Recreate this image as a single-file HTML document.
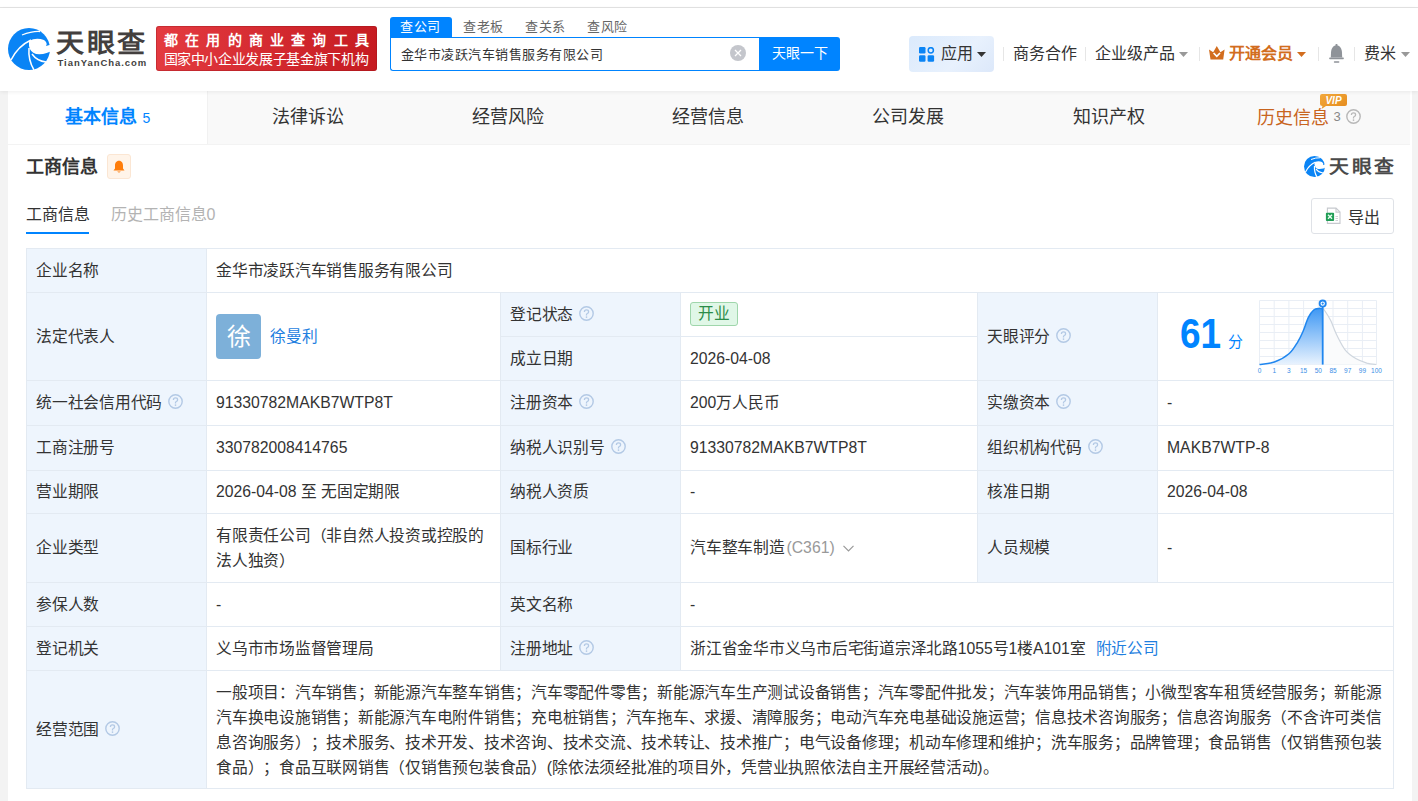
<!DOCTYPE html>
<html lang="zh-CN">
<head>
<meta charset="utf-8">
<title>金华市凌跃汽车销售服务有限公司 - 天眼查</title>
<style>
*{box-sizing:border-box;margin:0;padding:0}
html,body{width:1418px;height:801px;overflow:hidden;background:#f3f3f3}
body{position:relative;font-family:"Liberation Sans",sans-serif;color:#333;font-size:15.75px;text-spacing-trim:space-all}
.a{position:absolute}
.t{position:absolute;white-space:nowrap;line-height:20px}
#topline{left:0;top:0;width:1418px;height:8px;background:#fff;border-bottom:1px solid #e4e4e4}
#header{left:0;top:8px;width:1418px;height:83px;background:#fff;box-shadow:0 1px 4px rgba(0,0,0,.07);z-index:2}
#card{left:8px;top:91px;width:1404px;height:710px;background:#fff}
#tabbar{left:8px;top:91px;width:1402px;height:53px;background:#f9f9f9}
.tab{position:absolute;top:0;height:53px;text-align:center;line-height:53px;font-size:18px;color:#333;white-space:nowrap}
.vline{position:absolute;width:1px;background:#e8e8e8}
.c{position:absolute;border:1px solid #e3eaf2;display:flex;align-items:center;padding-left:9px;white-space:nowrap;font-size:15.75px;line-height:20px;color:#333}
.lb{background:#eef5fd}
.qg:after{color:#b0b0b0}
.vl{background:#fff}
.q{display:inline-block;margin-left:6px;position:relative;top:1.3px;vertical-align:top}
.av{display:inline-block;width:45px;height:45px;border-radius:4px;background:#7db0d9;color:#fff;font-size:24px;line-height:45px;text-align:center}
.lk{color:#1f7fdf}
.badge{display:inline-block;height:24px;line-height:22px;padding:0 7px;border:1px solid #9fd6ab;background:#e0f7e7;color:#2b8c48;border-radius:3px;position:relative;top:-1px}
.scope{line-height:25px}
.k{letter-spacing:-0.25px}
</style>
</head>
<body>
<div id="topline" class="a"></div>
<div id="header" class="a">
  <!-- logo -->
  <svg class="a" style="left:6px;top:18px" width="48" height="46" viewBox="0 0 48 46">
    <circle cx="23" cy="23" r="21" fill="#0a84f5"/>
    <path d="M16 9 Q26 5 34 5.5" stroke="#fff" stroke-width="1.3" fill="none"/>
    <path d="M23 15 Q30 11 38 14 Q42 17 40 20 L47 18 L47 24 Q40 29 30 28 Q24 26 23 20 Z" fill="#fff"/>
    <path d="M5 34 Q12 20 25 14" stroke="#fff" stroke-width="1.5" fill="none"/>
    <path d="M23 22 Q22 34 28 44" stroke="#fff" stroke-width="1.5" fill="none"/>
    <path d="M26 28 Q31 35 40 36" stroke="#fff" stroke-width="1.5" fill="none"/>
  </svg>
  <div class="t" style="left:56px;top:20px;font-size:26px;line-height:30px;font-weight:bold;color:#433f3e;letter-spacing:2.3px;transform:scaleX(1.08);transform-origin:0 0">天眼查</div>
  <div class="t" style="left:57.5px;top:49.3px;font-size:9.5px;line-height:12px;font-weight:bold;color:#433f3e;letter-spacing:0.95px">TianYanCha.com</div>
  <!-- red banner -->
  <div class="a" style="left:156px;top:18px;width:221px;height:45px;border-radius:3px;background:linear-gradient(100deg,#e43b41,#c51a20);box-shadow:inset 0 0 0 1px rgba(150,20,25,.35)"></div>
  <div class="t" style="left:164px;top:24px;font-size:14px;line-height:16px;color:#fff;letter-spacing:7.2px;font-weight:bold">都在用的商业查询工具</div>
  <div class="t" style="left:163.5px;top:42.5px;font-size:14px;line-height:16px;color:#fff;letter-spacing:-0.35px;font-weight:500">国家中小企业发展子基金旗下机构</div>
  <!-- search tabs -->
  <div class="a" style="left:390px;top:9px;width:62px;height:21px;background:#0084ff;border-radius:3px 3px 0 0"></div>
  <div class="t" style="left:400px;top:9.5px;font-size:13px;line-height:18px;color:#fff;letter-spacing:0.5px">查公司</div>
  <div class="t" style="left:463px;top:9.5px;font-size:13px;line-height:18px;color:#666;letter-spacing:0.5px">查老板</div>
  <div class="t" style="left:525px;top:9.5px;font-size:13px;line-height:18px;color:#666;letter-spacing:0.5px">查关系</div>
  <div class="t" style="left:587px;top:9.5px;font-size:13px;line-height:18px;color:#666;letter-spacing:0.5px">查风险</div>
  <div class="a" style="left:390px;top:29px;width:372px;height:34px;border:1px solid #0084ff;border-right:0;border-radius:0 0 0 3px;background:#fff"></div>
  <div class="t" style="left:400.5px;top:37.5px;font-size:13px;line-height:18px;color:#333;letter-spacing:0.5px">金华市凌跃汽车销售服务有限公司</div>
  <svg class="a" style="left:730px;top:37px" width="16" height="16" viewBox="0 0 16 16"><circle cx="8" cy="8" r="8" fill="#c4c6cc"/><path d="M5 5L11 11M11 5L5 11" stroke="#fff" stroke-width="1.3"/></svg>
  <div class="a" style="left:759px;top:29px;width:81px;height:34px;background:#0084ff;border-radius:0 3px 3px 0"></div>
  <div class="t" style="left:772px;top:36px;font-size:14px;line-height:18px;color:#fff">天眼一下</div>
  <!-- right nav -->
  <div class="a" style="left:909px;top:28px;width:85px;height:36px;border-radius:4px;background:linear-gradient(135deg,#dbeafc,#e8f1fd 60%,#dce8fa)"></div>
  <svg class="a" style="left:919px;top:39px" width="16" height="15" viewBox="0 0 16 15">
    <rect x="0" y="0" width="6.5" height="6.5" rx="1.2" fill="#0a84f5"/>
    <circle cx="11.8" cy="3.3" r="2.6" fill="none" stroke="#0a84f5" stroke-width="1.5"/>
    <rect x="0" y="8.3" width="6.5" height="6.5" rx="1.2" fill="#0a84f5"/>
    <rect x="8.6" y="8.3" width="6.5" height="6.5" rx="1.2" fill="#0a84f5"/>
  </svg>
  <div class="t" style="left:941px;top:36px;font-size:16px;line-height:20px;color:#333">应用</div>
  <svg class="a" style="left:977px;top:44px" width="9" height="5" viewBox="0 0 9 5"><path d="M0 0H9L4.5 5Z" fill="#333"/></svg>
  <div class="a" style="left:1003px;top:39px;width:1px;height:14px;background:#e6e6e6"></div>
  <div class="t" style="left:1013px;top:36px;font-size:16px;line-height:20px;color:#333">商务合作</div>
  <div class="a" style="left:1085px;top:39px;width:1px;height:14px;background:#e6e6e6"></div>
  <div class="t" style="left:1095px;top:36px;font-size:16px;line-height:20px;color:#333">企业级产品</div>
  <svg class="a" style="left:1179px;top:44px" width="9" height="5" viewBox="0 0 9 5"><path d="M0 0H9L4.5 5Z" fill="#999"/></svg>
  <div class="a" style="left:1199px;top:39px;width:1px;height:14px;background:#e6e6e6"></div>
  <svg class="a" style="left:1209px;top:38px" width="16" height="14" viewBox="0 0 16 14"><path d="M0 3.4 L4.2 6.2 L7.8 0 L11.4 6.2 L15.6 3.4 L14.2 13.5 H1.5 Z" fill="#d26d1e"/><path d="M4.6 7 L7.8 10.3 L11 7" stroke="#fff" stroke-width="1.7" fill="none"/></svg>
  <div class="t" style="left:1229px;top:36px;font-size:16px;line-height:20px;color:#d26d1e;font-weight:bold">开通会员</div>
  <svg class="a" style="left:1297px;top:44px" width="9" height="5" viewBox="0 0 9 5"><path d="M0 0H9L4.5 5Z" fill="#d26d1e"/></svg>
  <div class="a" style="left:1318px;top:39px;width:1px;height:14px;background:#e6e6e6"></div>
  <svg class="a" style="left:1328px;top:36px" width="17" height="19" viewBox="0 0 17 19"><path d="M8.5 1.2 C4.6 1.6 3.2 4.8 3 8.5 L2.8 13.6 H14.2 L14 8.5 C13.8 4.8 12.4 1.6 8.5 1.2Z" fill="#8f9399"/><rect x="1.2" y="13.4" width="14.6" height="1.8" rx="0.6" fill="#8f9399"/><rect x="7.6" y="0" width="1.8" height="2" fill="#8f9399"/><rect x="5.8" y="17.3" width="5.6" height="1.4" rx="0.7" fill="#8f9399"/></svg>
  <div class="a" style="left:1354px;top:39px;width:1px;height:14px;background:#e6e6e6"></div>
  <div class="t" style="left:1364px;top:36px;font-size:16px;line-height:20px;color:#333">费米</div>
  <svg class="a" style="left:1401px;top:44px" width="9" height="5" viewBox="0 0 9 5"><path d="M0 0H9L4.5 5Z" fill="#999"/></svg>
</div>

<div id="card" class="a"></div>
<div class="a" style="left:8px;top:144px;width:1402px;height:1px;background:#f3f3f3"></div>
<div id="tabbar" class="a">
  <div class="tab" style="left:0;width:199px;background:#fff;color:#0084ff;font-weight:bold">基本信息<span style="font-size:14px;font-weight:normal;margin-left:6px">5</span></div>
  <div class="tab" style="left:199px;width:201px">法律诉讼</div>
  <div class="a" style="left:199px;top:0;width:1px;height:53px;background:#f1f1f1"></div>
  <div class="tab" style="left:400px;width:200px">经营风险</div>
  <div class="tab" style="left:600px;width:200px">经营信息</div>
  <div class="tab" style="left:800px;width:200px">公司发展</div>
  <div class="tab" style="left:1000px;width:201px">知识产权</div>
  <div class="t" style="left:1249px;top:16px;font-size:18px;line-height:22px;color:#c8641e">历史信息</div>
  <div class="t" style="left:1325.5px;top:16.5px;font-size:13px;line-height:18px;color:#888">3</div>
  <svg class="a" style="left:1312px;top:3px" width="28" height="15" viewBox="0 0 28 15"><defs><linearGradient id="gv" x1="0" y1="0" x2="1" y2="1"><stop offset="0" stop-color="#f3a93c"/><stop offset="1" stop-color="#e48a1c"/></linearGradient></defs><path d="M2 0H25Q27 0 27 2V10Q27 12 25 12H6L1.5 15L2.5 12Q0 12 0 10V2Q0 0 2 0Z" fill="url(#gv)"/><text x="13.5" y="10" font-size="10" font-weight="bold" font-style="italic" fill="#fff" text-anchor="middle" font-family="Liberation Sans">VIP</text></svg>
  <svg class="a" style="left:1338px;top:18px" width="15" height="15" viewBox="0 0 15 15"><circle cx="7.5" cy="7.5" r="6.7" fill="none" stroke="#b8b8b8" stroke-width="1.4"/><path d="M5.4 5.9 Q5.4 3.9 7.5 3.9 Q9.6 3.9 9.6 5.7 Q9.6 6.9 8.3 7.5 Q7.5 7.9 7.5 8.8 V9.4" fill="none" stroke="#b8b8b8" stroke-width="1.3"/><circle cx="7.5" cy="11.1" r="0.85" fill="#b8b8b8"/></svg>
</div>
<!-- section title -->
<div class="t" style="left:25.5px;top:157px;font-size:18px;line-height:20px;font-weight:bold;color:#333">工商信息</div>
<div class="a" style="left:107px;top:154px;width:24px;height:25px;border-radius:3px;background:#fff4e9;border:1px solid #fbe6d3"></div>
<svg class="a" style="left:112px;top:159.5px" width="14" height="14" viewBox="0 0 14 14"><path d="M7 0.8 C4.2 0.8 3 3.2 3 5.8 V8.6 L1.5 10.6 H12.5 L11 8.6 V5.8 C11 3.2 9.8 0.8 7 0.8Z" fill="#ff7d0a"/><path d="M5.2 11.4 Q7 13.6 8.8 11.4Z" fill="#ff7d0a"/></svg>
<svg class="a" style="left:1303px;top:155px" width="24" height="23" viewBox="0 0 48 46">
  <circle cx="23" cy="23" r="21" fill="#0a84f5"/>
  <path d="M16 9 Q26 5 34 5.5" stroke="#fff" stroke-width="2" fill="none"/>
  <path d="M23 15 Q30 11 38 14 Q42 17 40 20 L47 18 L47 24 Q40 29 30 28 Q24 26 23 20 Z" fill="#fff"/>
  <path d="M5 34 Q12 20 25 14" stroke="#fff" stroke-width="2.4" fill="none"/>
  <path d="M23 22 Q22 34 28 44" stroke="#fff" stroke-width="2.4" fill="none"/>
  <path d="M26 28 Q31 35 40 36" stroke="#fff" stroke-width="2.4" fill="none"/>
</svg>
<div class="t" style="left:1329px;top:157px;font-size:18px;line-height:20px;font-weight:bold;color:#4a4a4a;letter-spacing:2.5px;transform:scaleX(1.1);transform-origin:0 0">天眼查</div>
<div class="t" style="left:25.5px;top:205px;font-size:16px;line-height:20px;color:#333">工商信息</div>
<div class="a" style="left:26px;top:232px;width:63px;height:2px;background:#0084ff"></div>
<div class="t" style="left:110.5px;top:205px;font-size:16px;line-height:20px;color:#b3b3b3">历史工商信息0</div>
<div class="a" style="left:1311px;top:198px;width:83px;height:36px;border:1px solid #dfe2e7;border-radius:3px;background:#fff"></div>
<svg class="a" style="left:1325px;top:207px" width="16" height="17" viewBox="0 0 16 17">
  <path d="M2.4 1.1 H11 L15 5.1 V16.4 H2.4 Z" fill="#fff" stroke="#c6c9ce" stroke-width="1.1"/>
  <path d="M11 1.1 V5.1 H15" fill="none" stroke="#c6c9ce" stroke-width="1.1"/>
  <path d="M10.5 9.5 H13 M10.5 11.5 H13 M10.5 13.5 H13" stroke="#cfd2d6" stroke-width="1.1"/>
  <rect x="0.9" y="5.7" width="8.2" height="8.2" rx="1" fill="#1f9d55"/>
  <path d="M3 7.8 L7 11.8 M7 7.8 L3 11.8" stroke="#eafff2" stroke-width="1.4"/>
</svg>
<div class="t" style="left:1347.5px;top:208px;font-size:16px;line-height:20px;color:#333">导出</div>

<!-- table -->
<div id="tbl">
<div class="c lb" style="left:26px;top:248px;width:181px;height:45px;"><div class="in"><span class="k">企业名称</span></div></div>
<div class="c vl" style="left:206px;top:248px;width:1188px;height:45px;"><div class="in"><span class="k">金华市凌跃汽车销售服务有限公司</span></div></div>
<div class="c lb" style="left:26px;top:292px;width:181px;height:89px;"><div class="in"><span class="k">法定代表人</span></div></div>
<div class="c vl" style="left:206px;top:292px;width:295px;height:89px;"><div class="in"><div style="display:flex;align-items:center"><span class="av"><span class="k">徐</span></span><span class="lk" style="margin-left:9px"><span class="k">徐曼利</span></span></div></div></div>
<div class="c lb" style="left:500px;top:292px;width:181px;height:45px;"><div class="in"><span class="k">登记状态</span><svg class="q" width="15" height="15" viewBox="0 0 15 15"><circle cx="7.5" cy="7.5" r="6.7" fill="none" stroke="#b3c9e5" stroke-width="1.4"/><path d="M5.4 5.9 Q5.4 3.9 7.5 3.9 Q9.6 3.9 9.6 5.7 Q9.6 6.9 8.3 7.5 Q7.5 7.9 7.5 8.8 V9.4" fill="none" stroke="#b3c9e5" stroke-width="1.3"/><circle cx="7.5" cy="11.1" r="0.85" fill="#b3c9e5"/></svg></div></div>
<div class="c vl" style="left:680px;top:292px;width:298px;height:45px;"><div class="in"><span class="badge"><span class="k">开业</span></span></div></div>
<div class="c lb" style="left:500px;top:336px;width:181px;height:45px;"><div class="in"><span class="k">成立日期</span></div></div>
<div class="c vl" style="left:680px;top:336px;width:298px;height:45px;"><div class="in">2026-04-08</div></div>
<div class="c lb" style="left:977px;top:292px;width:181px;height:89px;"><div class="in"><span class="k">天眼评分</span><svg class="q" width="15" height="15" viewBox="0 0 15 15"><circle cx="7.5" cy="7.5" r="6.7" fill="none" stroke="#b3c9e5" stroke-width="1.4"/><path d="M5.4 5.9 Q5.4 3.9 7.5 3.9 Q9.6 3.9 9.6 5.7 Q9.6 6.9 8.3 7.5 Q7.5 7.9 7.5 8.8 V9.4" fill="none" stroke="#b3c9e5" stroke-width="1.3"/><circle cx="7.5" cy="11.1" r="0.85" fill="#b3c9e5"/></svg></div></div>
<div class="c vl" style="left:1157px;top:292px;width:237px;height:89px;"><div class="in"></div></div>
<div class="c lb" style="left:26px;top:380px;width:181px;height:46px;"><div class="in"><span class="k">统一社会信用代码</span><svg class="q" width="15" height="15" viewBox="0 0 15 15"><circle cx="7.5" cy="7.5" r="6.7" fill="none" stroke="#b3c9e5" stroke-width="1.4"/><path d="M5.4 5.9 Q5.4 3.9 7.5 3.9 Q9.6 3.9 9.6 5.7 Q9.6 6.9 8.3 7.5 Q7.5 7.9 7.5 8.8 V9.4" fill="none" stroke="#b3c9e5" stroke-width="1.3"/><circle cx="7.5" cy="11.1" r="0.85" fill="#b3c9e5"/></svg></div></div>
<div class="c vl" style="left:206px;top:380px;width:295px;height:46px;"><div class="in">91330782MAKB7WTP8T</div></div>
<div class="c lb" style="left:500px;top:380px;width:181px;height:46px;"><div class="in"><span class="k">注册资本</span><svg class="q" width="15" height="15" viewBox="0 0 15 15"><circle cx="7.5" cy="7.5" r="6.7" fill="none" stroke="#b3c9e5" stroke-width="1.4"/><path d="M5.4 5.9 Q5.4 3.9 7.5 3.9 Q9.6 3.9 9.6 5.7 Q9.6 6.9 8.3 7.5 Q7.5 7.9 7.5 8.8 V9.4" fill="none" stroke="#b3c9e5" stroke-width="1.3"/><circle cx="7.5" cy="11.1" r="0.85" fill="#b3c9e5"/></svg></div></div>
<div class="c vl" style="left:680px;top:380px;width:298px;height:46px;"><div class="in">200<span class="k">万人民币</span></div></div>
<div class="c lb" style="left:977px;top:380px;width:181px;height:46px;"><div class="in"><span class="k">实缴资本</span><svg class="q" width="15" height="15" viewBox="0 0 15 15"><circle cx="7.5" cy="7.5" r="6.7" fill="none" stroke="#b3c9e5" stroke-width="1.4"/><path d="M5.4 5.9 Q5.4 3.9 7.5 3.9 Q9.6 3.9 9.6 5.7 Q9.6 6.9 8.3 7.5 Q7.5 7.9 7.5 8.8 V9.4" fill="none" stroke="#b3c9e5" stroke-width="1.3"/><circle cx="7.5" cy="11.1" r="0.85" fill="#b3c9e5"/></svg></div></div>
<div class="c vl" style="left:1157px;top:380px;width:237px;height:46px;"><div class="in">-</div></div>
<div class="c lb" style="left:26px;top:425px;width:181px;height:46px;"><div class="in"><span class="k">工商注册号</span></div></div>
<div class="c vl" style="left:206px;top:425px;width:295px;height:46px;"><div class="in">330782008414765</div></div>
<div class="c lb" style="left:500px;top:425px;width:181px;height:46px;"><div class="in"><span class="k">纳税人识别号</span><svg class="q" width="15" height="15" viewBox="0 0 15 15"><circle cx="7.5" cy="7.5" r="6.7" fill="none" stroke="#b3c9e5" stroke-width="1.4"/><path d="M5.4 5.9 Q5.4 3.9 7.5 3.9 Q9.6 3.9 9.6 5.7 Q9.6 6.9 8.3 7.5 Q7.5 7.9 7.5 8.8 V9.4" fill="none" stroke="#b3c9e5" stroke-width="1.3"/><circle cx="7.5" cy="11.1" r="0.85" fill="#b3c9e5"/></svg></div></div>
<div class="c vl" style="left:680px;top:425px;width:298px;height:46px;"><div class="in">91330782MAKB7WTP8T</div></div>
<div class="c lb" style="left:977px;top:425px;width:181px;height:46px;"><div class="in"><span class="k">组织机构代码</span><svg class="q" width="15" height="15" viewBox="0 0 15 15"><circle cx="7.5" cy="7.5" r="6.7" fill="none" stroke="#b3c9e5" stroke-width="1.4"/><path d="M5.4 5.9 Q5.4 3.9 7.5 3.9 Q9.6 3.9 9.6 5.7 Q9.6 6.9 8.3 7.5 Q7.5 7.9 7.5 8.8 V9.4" fill="none" stroke="#b3c9e5" stroke-width="1.3"/><circle cx="7.5" cy="11.1" r="0.85" fill="#b3c9e5"/></svg></div></div>
<div class="c vl" style="left:1157px;top:425px;width:237px;height:46px;"><div class="in">MAKB7WTP-8</div></div>
<div class="c lb" style="left:26px;top:470px;width:181px;height:44px;"><div class="in"><span class="k">营业期限</span></div></div>
<div class="c vl" style="left:206px;top:470px;width:295px;height:44px;"><div class="in">2026-04-08 <span class="k">至</span> <span class="k">无固定期限</span></div></div>
<div class="c lb" style="left:500px;top:470px;width:181px;height:44px;"><div class="in"><span class="k">纳税人资质</span></div></div>
<div class="c vl" style="left:680px;top:470px;width:298px;height:44px;"><div class="in">-</div></div>
<div class="c lb" style="left:977px;top:470px;width:181px;height:44px;"><div class="in"><span class="k">核准日期</span></div></div>
<div class="c vl" style="left:1157px;top:470px;width:237px;height:44px;"><div class="in">2026-04-08</div></div>
<div class="c lb" style="left:26px;top:513px;width:181px;height:70px;"><div class="in"><span class="k">企业类型</span></div></div>
<div class="c vl" style="left:206px;top:513px;width:295px;height:70px;"><div class="in"><div style="line-height:25px"><span class="k">有限责任公司（非自然人投资或控股的</span><br><span class="k">法人独资）</span></div></div></div>
<div class="c lb" style="left:500px;top:513px;width:181px;height:70px;"><div class="in"><span class="k">国标行业</span></div></div>
<div class="c vl" style="left:680px;top:513px;width:298px;height:70px;"><div class="in"><span class="k">汽车整车制造</span><span style="color:#999;margin-left:2px">(C361)</span><svg style="margin-left:8px;vertical-align:middle" width="11" height="7" viewBox="0 0 11 7"><path d="M0.5 0.8 L5.5 5.8 L10.5 0.8" fill="none" stroke="#999" stroke-width="1.2"/></svg></div></div>
<div class="c lb" style="left:977px;top:513px;width:181px;height:70px;"><div class="in"><span class="k">人员规模</span></div></div>
<div class="c vl" style="left:1157px;top:513px;width:237px;height:70px;"><div class="in">-</div></div>
<div class="c lb" style="left:26px;top:582px;width:181px;height:45px;"><div class="in"><span class="k">参保人数</span></div></div>
<div class="c vl" style="left:206px;top:582px;width:295px;height:45px;"><div class="in">-</div></div>
<div class="c lb" style="left:500px;top:582px;width:181px;height:45px;"><div class="in"><span class="k">英文名称</span></div></div>
<div class="c vl" style="left:680px;top:582px;width:714px;height:45px;"><div class="in">-</div></div>
<div class="c lb" style="left:26px;top:626px;width:181px;height:45px;"><div class="in"><span class="k">登记机关</span></div></div>
<div class="c vl" style="left:206px;top:626px;width:295px;height:45px;"><div class="in"><span class="k">义乌市市场监督管理局</span></div></div>
<div class="c lb" style="left:500px;top:626px;width:181px;height:45px;"><div class="in"><span class="k">注册地址</span><svg class="q" width="15" height="15" viewBox="0 0 15 15"><circle cx="7.5" cy="7.5" r="6.7" fill="none" stroke="#b3c9e5" stroke-width="1.4"/><path d="M5.4 5.9 Q5.4 3.9 7.5 3.9 Q9.6 3.9 9.6 5.7 Q9.6 6.9 8.3 7.5 Q7.5 7.9 7.5 8.8 V9.4" fill="none" stroke="#b3c9e5" stroke-width="1.3"/><circle cx="7.5" cy="11.1" r="0.85" fill="#b3c9e5"/></svg></div></div>
<div class="c vl" style="left:680px;top:626px;width:714px;height:45px;"><div class="in"><span class="k">浙江省金华市义乌市后宅街道宗泽北路</span>1055<span class="k">号</span>1<span class="k">楼</span>A101<span class="k">室</span><span class="lk" style="margin-left:10px"><span class="k">附近公司</span></span></div></div>
<div class="c lb" style="left:26px;top:670px;width:181px;height:119px;"><div class="in"><span class="k">经营范围</span><svg class="q" width="15" height="15" viewBox="0 0 15 15"><circle cx="7.5" cy="7.5" r="6.7" fill="none" stroke="#b3c9e5" stroke-width="1.4"/><path d="M5.4 5.9 Q5.4 3.9 7.5 3.9 Q9.6 3.9 9.6 5.7 Q9.6 6.9 8.3 7.5 Q7.5 7.9 7.5 8.8 V9.4" fill="none" stroke="#b3c9e5" stroke-width="1.3"/><circle cx="7.5" cy="11.1" r="0.85" fill="#b3c9e5"/></svg></div></div>
<div class="c vl" style="left:206px;top:670px;width:1188px;height:119px;"><div class="in"><div class="scope"><span class="k">一般项目：汽车销售；新能源汽车整车销售；汽车零配件零售；新能源汽车生产测试设备销售；汽车零配件批发；汽车装饰用品销售；小微型客车租赁经营服务；新能源</span><br><span class="k">汽车换电设施销售；新能源汽车电附件销售；充电桩销售；汽车拖车、求援、清障服务；电动汽车充电基础设施运营；信息技术咨询服务；信息咨询服务（不含许可类信</span><br><span class="k">息咨询服务）；技术服务、技术开发、技术咨询、技术交流、技术转让、技术推广；电气设备修理；机动车修理和维护；洗车服务；品牌管理；食品销售（仅销售预包装</span><br><span class="k">食品）；食品互联网销售（仅销售预包装食品）</span>(<span class="k">除依法须经批准的项目外，凭营业执照依法自主开展经营活动</span>)<span class="k">。</span></div></div></div>
</div>
<div class="t" style="left:1180px;top:312px;font-size:42px;line-height:44px;font-weight:bold;color:#0084ff;transform:scaleX(0.88);transform-origin:0 0">61</div><div class="t" style="left:1227.5px;top:333px;font-size:15px;line-height:18px;color:#0084ff">分</div>
<svg class="a" style="left:1259px;top:300px;overflow:visible" width="118" height="76" viewBox="0 0 118 76">
<defs><linearGradient id="g1" x1="0" y1="0" x2="0" y2="1"><stop offset="0" stop-color="#3f98f4"/><stop offset="1" stop-color="#e9f3fe"/></linearGradient></defs>
<g stroke="#e9eef5" stroke-width="1">
<path d="M0.5 0.5V64.5M15.2 0.5V64.5M29.9 0.5V64.5M44.6 0.5V64.5M59.3 0.5V64.5M74 0.5V64.5M88.7 0.5V64.5M103.4 0.5V64.5M117.5 0.5V64.5"/>
<path d="M0.5 0.5H117.5M0.5 8.5H117.5M0.5 16.5H117.5M0.5 24.5H117.5M0.5 32.5H117.5M0.5 40.5H117.5M0.5 48.5H117.5M0.5 56.5H117.5M0.5 64.5H117.5"/>
</g>
<path d="M63.7 8.9 C64.0 9.1 64.0 8.1 65.3 10.0 C66.6 11.9 69.6 16.4 71.7 20.6 C73.8 24.9 75.5 30.6 78.0 35.5 C80.5 40.5 83.3 46.4 86.5 50.3 C89.7 54.2 93.7 56.7 97.2 58.8 C100.8 60.9 104.5 62.1 107.8 63.1 C111.1 64.0 115.7 64.3 117.3 64.5 L117.3 64.6 L63.7 64.6Z" fill="#fafbfc"/>
<path d="M0.5 64.5 C3.0 64.1 10.4 63.8 15.4 62.0 C20.4 60.2 26.4 56.9 30.3 53.5 C34.2 50.1 36.5 45.5 38.8 41.8 C41.1 38.1 42.3 35.3 44.1 31.2 C45.9 27.1 47.6 20.9 49.4 17.4 C51.2 13.9 52.9 11.5 54.7 10.0 C56.5 8.5 58.5 8.6 60.0 8.4 C61.5 8.2 63.1 8.8 63.7 8.9 L63.7 64.6 L0.5 64.6Z" fill="url(#g1)"/>
<path d="M0.5 64.5 C3.0 64.1 10.4 63.8 15.4 62.0 C20.4 60.2 26.4 56.9 30.3 53.5 C34.2 50.1 36.5 45.5 38.8 41.8 C41.1 38.1 42.3 35.3 44.1 31.2 C45.9 27.1 47.6 20.9 49.4 17.4 C51.2 13.9 52.9 11.5 54.7 10.0 C56.5 8.5 58.5 8.6 60.0 8.4 C61.5 8.2 63.1 8.8 63.7 8.9" fill="none" stroke="#1f86ef" stroke-width="1.5"/>
<path d="M63.7 8.9 C64.0 9.1 64.0 8.1 65.3 10.0 C66.6 11.9 69.6 16.4 71.7 20.6 C73.8 24.9 75.5 30.6 78.0 35.5 C80.5 40.5 83.3 46.4 86.5 50.3 C89.7 54.2 93.7 56.7 97.2 58.8 C100.8 60.9 104.5 62.1 107.8 63.1 C111.1 64.0 115.7 64.3 117.3 64.5" fill="none" stroke="#cfd6de" stroke-width="1.2"/>
<path d="M63.7 6 V64.6" stroke="#1f86ef" stroke-width="1.8"/>
<circle cx="63.7" cy="3.6" r="3.1" fill="#fff" stroke="#1f86ef" stroke-width="1.8"/>
<circle cx="63.7" cy="3.6" r="1.1" fill="#1f86ef"/>
<g font-size="6.5" fill="#3a8ee6" text-anchor="middle" font-family="Liberation Sans">
<text x="0.5" y="73">0</text><text x="15.2" y="73">1</text><text x="29.9" y="73">3</text><text x="44.6" y="73">15</text><text x="59.3" y="73">50</text><text x="74" y="73">85</text><text x="88.7" y="73">97</text><text x="103.4" y="73">99</text><text x="117.5" y="73">100</text>
</g></svg>
</body>
</html>
